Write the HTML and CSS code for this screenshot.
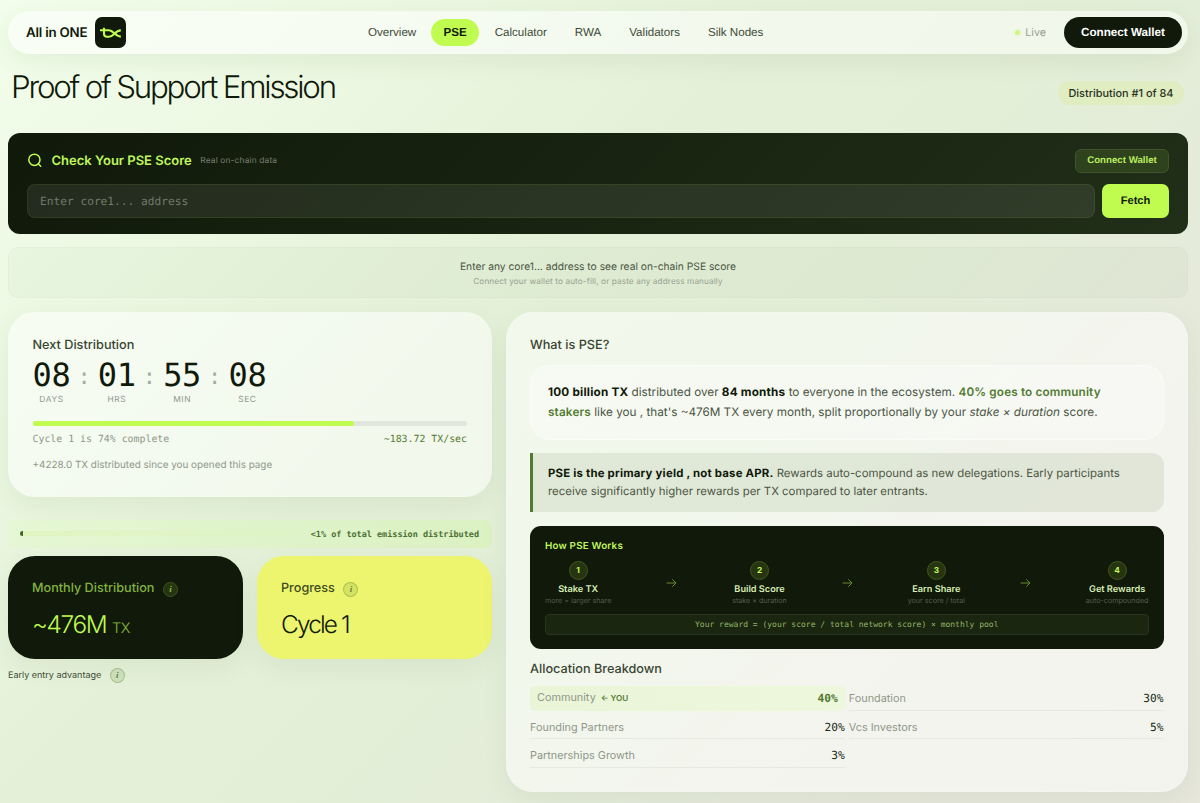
FILE: index.html
```html
<!DOCTYPE html>
<html lang="en">
<head>
    <meta charset="UTF-8">
    <meta name="viewport" content="width=device-width, initial-scale=1.0">
    <title>Proof of Support Emission</title>
    <link rel="stylesheet" href="styles.css">
</head>
<body>
    <nav class="navbar">
        <div class="brand">
            <span class="brand-name">All in ONE</span>
            <span class="brand-logo">
                <svg width="31" height="31" viewBox="0 0 31 31" fill="none" stroke="#c0fc50" stroke-width="2.1">
                    <path d="M5 13.2H14C18.5 13.2 20 19.6 25.8 19.6M9 10.8V16.8Q9 19.8 11.9 19.8H14C18.5 19.8 20 13.4 25.8 13.4"/>
                </svg>
            </span>
        </div>
        <div class="nav-links">
            <a class="nav-link">Overview</a>
            <a class="nav-link active">PSE</a>
            <a class="nav-link">Calculator</a>
            <a class="nav-link">RWA</a>
            <a class="nav-link">Validators</a>
            <a class="nav-link">Silk Nodes</a>
        </div>
        <div class="nav-right">
            <span class="live"><i class="live-dot"></i>Live</span>
            <button class="wallet-btn">Connect Wallet</button>
        </div>
    </nav>

    <header class="page-head">
        <h1>Proof of Support Emission</h1>
        <span class="dist-badge">Distribution #1 of 84</span>
    </header>

    <section class="checker">
        <div class="checker-head">
            <svg class="search-icon" width="15" height="15" viewBox="0 0 15 15" fill="none" stroke="#c0fc50" stroke-width="1.5" stroke-linecap="round">
                <circle cx="6.4" cy="6.8" r="5.6"/>
                <path d="M10.5 11L12.7 13.2"/>
            </svg>
            <h2>Check Your PSE Score</h2>
            <span class="checker-note">Real on-chain data</span>
            <button class="connect-btn">Connect Wallet</button>
        </div>
        <div class="checker-row">
            <input class="address" type="text" placeholder="Enter core1... address">
            <button class="fetch-btn">Fetch</button>
        </div>
    </section>

    <section class="hint">
        <p class="hint-main">Enter any core1... address to see real on-chain PSE score</p>
        <p class="hint-sub">Connect your wallet to auto-fill, or paste any address manually</p>
    </section>

    <main class="columns">
        <div class="left">
            <section class="card next">
                <h3>Next Distribution</h3>
                <div class="countdown">
                    <div class="unit"><b>08</b><span>DAYS</span></div>
                    <i>:</i>
                    <div class="unit"><b>01</b><span>HRS</span></div>
                    <i>:</i>
                    <div class="unit"><b>55</b><span>MIN</span></div>
                    <i>:</i>
                    <div class="unit"><b>08</b><span>SEC</span></div>
                </div>
                <div class="progress"><div class="progress-fill" style="width: 74%"></div></div>
                <div class="cycle">
                    <span>Cycle 1 is 74% complete</span>
                    <span class="rate">~183.72 TX/sec</span>
                </div>
                <p class="since">+4228.0 TX distributed since you opened this page</p>
            </section>

            <div class="emission">
                <div class="emission-track"><div class="emission-fill"></div></div>
                <span>&lt;1% of total emission distributed</span>
            </div>

            <div class="stats">
                <section class="stat dark">
                    <h3>Monthly Distribution <span class="info">i</span></h3>
                    <div class="value">~476M <small>TX</small></div>
                </section>
                <section class="stat yellow">
                    <h3>Progress <span class="info">i</span></h3>
                    <div class="value">Cycle 1</div>
                </section>
            </div>
            <div class="early">Early entry advantage <span class="info">i</span></div>
        </div>

        <section class="card about">
            <h3>What is PSE?</h3>
            <p class="summary"><strong>100 billion TX</strong> distributed over <strong>84 months</strong> to everyone in the ecosystem. <strong class="green">40% goes to community<br>stakers</strong> like you , that's ~476M TX every month, split proportionally by your <em>stake × duration</em> score.</p>
            <p class="callout"><strong>PSE is the primary yield , not base APR.</strong> Rewards auto-compound as new delegations. Early participants<br>receive significantly higher rewards per TX compared to later entrants.</p>

            <div class="how">
                <h4>How PSE Works</h4>
                <div class="steps">
                    <div class="step"><span class="num">1</span><b>Stake TX</b><small>more = larger share</small></div>
                    <svg class="arrow" width="11" height="10" viewBox="0 0 11 10"><path d="M.6 5H10M6.3 1.3L10 5L6.3 8.7"/></svg>
                    <div class="step"><span class="num">2</span><b>Build Score</b><small>stake × duration</small></div>
                    <svg class="arrow" width="11" height="10" viewBox="0 0 11 10"><path d="M.6 5H10M6.3 1.3L10 5L6.3 8.7"/></svg>
                    <div class="step"><span class="num">3</span><b>Earn Share</b><small>your score / total</small></div>
                    <svg class="arrow" width="11" height="10" viewBox="0 0 11 10"><path d="M.6 5H10M6.3 1.3L10 5L6.3 8.7"/></svg>
                    <div class="step"><span class="num">4</span><b>Get Rewards</b><small>auto-compounded</small></div>
                </div>
                <div class="formula">Your reward = (your score / total network score) × monthly pool</div>
            </div>

            <h3 class="alloc-title">Allocation Breakdown</h3>
            <div class="alloc">
                <div class="alloc-row you"><span>Community <em>← YOU</em></span><b>40%</b></div>
                <div class="alloc-row"><span>Foundation</span><b>30%</b></div>
                <div class="alloc-row"><span>Founding Partners</span><b>20%</b></div>
                <div class="alloc-row"><span>Vcs Investors</span><b>5%</b></div>
                <div class="alloc-row"><span>Partnerships Growth</span><b>3%</b></div>
            </div>
        </section>
    </main>
</body>
</html>
```

FILE: styles.css
```css
* {
    box-sizing: border-box;
}

body {
    font-family: Inter, sans-serif;
    text-rendering: geometricPrecision;
    margin: 0;
    padding: 10.5px 12px 0 8px;
    height: 803px;
    overflow: hidden;
    color: #10190a;
    background: linear-gradient(135deg, #f2feeb 0%, #ecf8e2 20%, #e4f1d8 40%, #e3eed8 60%, #e6e9db 78%, #e7e7dc 100%);
}

h1, h2, h3, h4, p {
    margin: 0;
}

button {
    border: none;
    padding: 0;
    font-family: "Liberation Sans", Arial, sans-serif;
    font-weight: 700;
    text-rendering: geometricPrecision;
    cursor: pointer;
}

/* Navigation */
.navbar {
    display: flex;
    align-items: center;
    justify-content: space-between;
    position: relative;
    height: 43px;
    padding: 0 6px 0 18px;
    border-radius: 22px;
    background: rgba(255, 255, 255, 0.52);
    box-shadow: 0 8px 24px rgba(60, 90, 40, 0.08);
}

.brand {
    display: flex;
    align-items: center;
    gap: 8px;
}

.brand-name {
    padding-top: 2px;
    font-size: 13.3px;
    font-weight: 600;
    letter-spacing: -0.2px;
}

.brand-logo {
    width: 31px;
    height: 31px;
    border-radius: 7px;
    background: #10190a;
}

.nav-links {
    position: absolute;
    left: 346.5px;
    display: flex;
    gap: 1.2px;
}

.nav-link {
    height: 27px;
    padding: 0 13.4px;
    border-radius: 14px;
    font-family: "Liberation Sans", Arial, sans-serif;
    font-size: 11.6px;
    line-height: 28px;
    color: #414b38;
}

.nav-link.active {
    margin-left: 0.5px;
    margin-right: 1px;
    background: #c0fc50;
    color: #10190a;
    font-weight: 700;
    padding: 0 12.3px;
}

.nav-right {
    display: flex;
    align-items: center;
    gap: 18px;
}

.live {
    display: flex;
    align-items: center;
    gap: 5px;
    font-size: 10.7px;
    color: #989e92;
}

.live-dot {
    width: 5px;
    height: 5px;
    border-radius: 50%;
    background: #cff582;
    box-shadow: 0 0 5px #dcf8a8;
}

.wallet-btn {
    width: 118px;
    height: 31px;
    border-radius: 16px;
    background: #10190a;
    color: #fff;
    font-size: 11.7px;
}

/* Title row */
.page-head {
    display: flex;
    justify-content: space-between;
    padding: 0 4px 0 3px;
    height: 79px;
}

.page-head h1 {
    margin-top: 13.5px;
    font-size: 31.3px;
    line-height: 40px;
    font-weight: 300;
    letter-spacing: -2.22px;
}

.dist-badge {
    margin-top: 27.5px;
    width: 126px;
    height: 24px;
    border-radius: 12px;
    background: #e0edc1;
    font-size: 10.9px;
    line-height: 25px;
    font-weight: 500;
    text-align: center;
    color: #28321f;
}

/* Score checker */
.checker {
    height: 101px;
    padding: 16px 19px 0;
    border-radius: 12px;
    background: linear-gradient(135deg, #10190a, #172310 45%, #212e18);
}

.checker-head {
    display: flex;
    align-items: center;
    height: 24px;
}

.search-icon {
    margin-left: 1px;
}

.checker-head h2 {
    margin-left: 8.5px;
    padding-top: 1px;
    font-size: 13px;
    font-weight: 600;
    color: #c0f75c;
}

.checker-note {
    margin-left: 8.5px;
    font-size: 8.4px;
    letter-spacing: 0.15px;
    color: #787e72;
}

.connect-btn {
    margin-left: auto;
    width: 94px;
    height: 24px;
    border: 1px solid #3f542a;
    border-radius: 6px;
    background: #2f421e;
    color: #b9ec5d;
    font-size: 9.7px;
}

.checker-row {
    display: flex;
    gap: 7px;
    margin-top: 11px;
}

.address {
    flex: 1;
    height: 34px;
    padding: 1px 12px 0;
    border: 1px solid rgba(192, 252, 80, 0.08);
    border-radius: 8px;
    background: rgba(255, 255, 255, 0.08);
    font-family: "DejaVu Sans Mono", monospace;
    font-size: 11.2px;
    text-rendering: geometricPrecision;
}

.address::placeholder {
    color: #727a6b;
}

.fetch-btn {
    width: 67px;
    height: 34px;
    border-radius: 7px;
    background: #c0fc50;
    color: #10190a;
    font-size: 11.1px;
}

/* Hint under the checker */
.hint {
    height: 51px;
    margin-top: 13.5px;
    padding-top: 12.5px;
    border: 1px solid rgba(16, 25, 10, 0.02);
    border-radius: 10px;
    background: rgba(16, 25, 10, 0.022);
    text-align: center;
}

.hint-main {
    font-size: 10.25px;
    line-height: 13px;
    color: #4b5543;
}

.hint-sub {
    margin-top: 2px;
    font-size: 8.2px;
    line-height: 11px;
    letter-spacing: 0.12px;
    color: #989f91;
}

/* Main columns */
.columns {
    display: grid;
    grid-template-columns: 484px 1fr;
    gap: 13.5px;
    margin-top: 13.5px;
}

.card {
    border-radius: 27px;
    background: rgba(255, 255, 255, 0.52);
    border: 1px solid rgba(255, 255, 255, 0.15);
    box-shadow: 0 8px 26px rgba(60, 90, 40, 0.07);
}

.card h3 {
    font-size: 12.7px;
    line-height: 16px;
    font-weight: 500;
    color: #3a4532;
}

.next {
    height: 185.5px;
    padding: 25px 24px 0 23.5px;
}

.countdown {
    display: flex;
    margin-top: 2.5px;
}

.unit {
    width: 38px;
    text-align: center;
}

.unit b {
    display: block;
    font-family: "DejaVu Sans Mono", monospace;
    font-size: 32px;
    line-height: 38px;
    font-weight: 400;
    letter-spacing: -0.3px;
}

.unit span {
    display: block;
    margin-top: -0.5px;
    font-size: 8.4px;
    line-height: 12px;
    letter-spacing: 0.6px;
    color: #90978a;
}

.countdown i {
    width: 27.3px;
    padding-top: 3px;
    text-align: center;
    font-family: "DejaVu Sans Mono", monospace;
    font-style: normal;
    font-size: 22px;
    line-height: 38px;
    color: #a5aca0;
}

.progress {
    height: 5px;
    margin-top: 15px;
    border-radius: 3px;
    background: #e2e7dd;
}

.progress-fill {
    height: 100%;
    border-radius: 3px;
    background: #c0fc50;
}

.cycle {
    display: flex;
    justify-content: space-between;
    margin-top: 7px;
    font-family: "DejaVu Sans Mono", monospace;
    font-size: 9.9px;
    line-height: 13px;
    color: #90978a;
}

.rate {
    color: #527a31;
}

.since {
    margin-top: 13px;
    font-size: 9.9px;
    line-height: 13px;
    color: #90978a;
}

.emission {
    display: flex;
    align-items: center;
    gap: 12px;
    height: 28px;
    margin-top: 22.5px;
    padding: 0 13px 0 12px;
    border-radius: 6px;
    background: linear-gradient(90deg, rgba(225, 249, 203, 0.5), rgba(214, 243, 180, 0.6));
    font-family: "DejaVu Sans Mono", monospace;
    font-size: 8.47px;
    font-weight: 700;
    color: #4b7032;
}

.emission-track {
    flex: 1;
    height: 5px;
    border-radius: 3px;
    background: linear-gradient(90deg, rgba(222, 243, 182, 0.6), rgba(222, 243, 190, 0.2));
}

.emission-fill {
    width: 2.5px;
    height: 5px;
    border-radius: 3px 0 0 3px;
    background: #42692c;
}

.stats {
    display: grid;
    grid-template-columns: 1fr 1fr;
    gap: 14px;
    margin-top: 8.5px;
}

.stat {
    height: 103px;
    padding: 24px;
    border-radius: 27px;
    box-shadow: 0 8px 26px rgba(60, 90, 40, 0.07);
}

.stat h3 {
    display: flex;
    align-items: center;
    gap: 8.5px;
    height: 17px;
    font-size: 12.65px;
    line-height: 17px;
    font-weight: 500;
}

.stat .value {
    margin-top: 11.5px;
    font-size: 24.4px;
    line-height: 30px;
    font-weight: 300;
    letter-spacing: -1.35px;
}

.value small {
    font-size: 14.5px;
    letter-spacing: -0.5px;
    opacity: 0.7;
}

.dark {
    background: #10190a;
    color: #c0fc50;
}

.dark h3 {
    color: #83b33d;
}

.yellow {
    background: #ecf56d;
}

.yellow h3 {
    color: #414b22;
}

.stat.yellow .value {
    letter-spacing: -1.85px;
}

.info {
    width: 15px;
    height: 15px;
    border: 1px solid rgba(90, 130, 50, 0.35);
    border-radius: 50%;
    background: rgba(90, 130, 50, 0.15);
    font-family: "Liberation Serif", serif;
    font-size: 9px;
    line-height: 13px;
    font-style: italic;
    font-weight: 700;
    text-align: center;
    color: #5d803c;
}

.stat .info {
    margin-top: 1.5px;
}

.dark .info {
    background: #25350f;
    border-color: #3d5420;
    color: #8dbc45;
}

.early {
    display: flex;
    align-items: center;
    gap: 8.5px;
    margin-top: 8px;
    font-size: 9px;
    line-height: 17px;
    color: #414b38;
}

/* What is PSE */
.about {
    height: 480.5px;
    padding: 25px 23.5px 0 23.5px;
}

.summary {
    height: 75px;
    margin-top: 11px;
    padding: 17.7px 17px 0;
    border-radius: 20px;
    border: 1px solid rgba(255, 255, 255, 0.4);
    background: rgba(255, 255, 255, 0.32);
    font-size: 11.72px;
    line-height: 19.5px;
    white-space: nowrap;
    color: #4b5543;
}

.summary strong, .callout strong {
    font-weight: 700;
    letter-spacing: 0.2px;
    color: #10190a;
}

.summary .green {
    font-weight: 600;
    letter-spacing: 0.16px;
    color: #527a31;
}

.callout {
    height: 59px;
    margin-top: 13.5px;
    padding: 12px 15px;
    border-left: 3px solid #527a31;
    border-radius: 0 12px 12px 0;
    background: rgba(82, 122, 49, 0.11);
    font-size: 11.4px;
    line-height: 17.7px;
    white-space: nowrap;
    color: #4b5543;
}

.how {
    height: 123px;
    margin-top: 14px;
    padding: 14.5px 15px;
    border-radius: 11px;
    background: #10190a;
}

.how h4 {
    font-size: 9.8px;
    line-height: 12px;
    font-weight: 600;
    letter-spacing: 0.2px;
    color: #c0f75c;
}

.steps {
    display: flex;
    justify-content: space-between;
    align-items: center;
    height: 44px;
    margin-top: 8.5px;
}

.step {
    display: flex;
    flex-direction: column;
    align-items: center;
}

.num {
    width: 19px;
    height: 19px;
    border: 1px solid #42581f;
    border-radius: 50%;
    background: #26350f;
    font-size: 8.3px;
    line-height: 18px;
    font-weight: 700;
    text-align: center;
    color: #c0f75c;
}

.step b {
    margin-top: 4px;
    font-size: 9.2px;
    line-height: 12px;
    font-weight: 600;
    color: #d9eeb5;
}

.step small {
    font-size: 7.15px;
    line-height: 9px;
    color: #555d4f;
}

.arrow {
    fill: none;
    stroke: #668b30;
    stroke-width: 1;
}

.formula {
    height: 21px;
    margin-top: 9px;
    border: 1px solid #27351a;
    border-radius: 4px;
    background: #1a260f;
    font-family: "DejaVu Sans Mono", monospace;
    font-size: 8px;
    line-height: 19px;
    text-align: center;
    color: #94b56a;
}

.about .alloc-title {
    margin-top: 13px;
}

.alloc {
    display: grid;
    grid-template-columns: 1fr 1fr;
    grid-template-rows: 25px 28.5px 28.5px;
    column-gap: 4px;
    margin-top: 7.5px;
}

.alloc-row {
    display: flex;
    align-items: flex-end;
    justify-content: space-between;
    padding-bottom: 3.5px;
    border-bottom: 1px solid rgba(16, 25, 10, 0.05);
    font-size: 10.85px;
    line-height: 15px;
    color: #90978a;
}

.alloc-row b {
    font-family: "DejaVu Sans Mono", monospace;
    font-weight: 400;
    font-size: 11.2px;
    color: #202b18;
}

.alloc-row.you {
    padding: 0 7px 4px;
    border-radius: 5px;
    border-bottom-color: transparent;
    background: linear-gradient(90deg, #eaf5d8, #edf7dc);
}

.you em {
    margin-left: 2px;
    font-size: 8.1px;
    font-style: normal;
    font-weight: 600;
    color: #527a31;
}

.you b {
    color: #527a31;
    font-weight: 700;
}
```
